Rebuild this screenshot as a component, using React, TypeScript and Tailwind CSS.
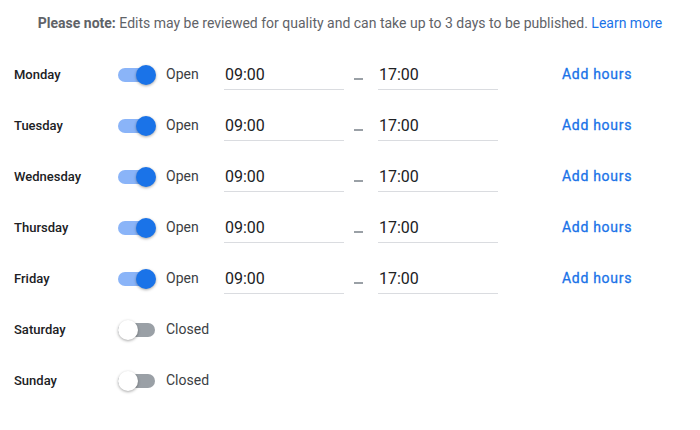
const days = [
  { name: "Monday", open: true },
  { name: "Tuesday", open: true },
  { name: "Wednesday", open: true },
  { name: "Thursday", open: true },
  { name: "Friday", open: true },
  { name: "Saturday", open: false },
  { name: "Sunday", open: false },
]

function Toggle({ on }: { on: boolean }) {
  return (
    <div className="relative w-[38px] h-[20px] flex items-center">
      <div className={`w-[37px] h-[14px] rounded-full ${on ? "bg-[#8ab4f8]" : "bg-[#9aa0a6]"}`} />
      <div
        className={`absolute top-0 w-[20px] h-[20px] rounded-full shadow-[0_1px_3px_rgba(0,0,0,0.35)] ${
          on ? "left-[18px] bg-[#1a73e8]" : "left-0 bg-white"
        }`}
      />
    </div>
  )
}

function TimeField({ value }: { value: string }) {
  return (
    <div className="w-[120px] h-[30px] flex items-center border-b border-[#dadce0] text-[16px] text-[#202124] pl-[1px] pt-[2px]">
      {value}
    </div>
  )
}

export default function App() {
  return (
    <div className="w-[700px] h-[430px] bg-white font-['Roboto',sans-serif] px-[14px]">
      {/* note */}
      <div className="pt-[15px] text-center text-[14px] leading-[16px] text-[#5f6368]">
        <span className="font-bold">Please note:</span> Edits may be reviewed for quality and can take up to 3 days to be
        published. <span className="text-[#1a73e8]">Learn more</span>
      </div>

      <div className="mt-[18px]">
        {days.map((d) => (
          <div key={d.name} className="h-[51px] flex items-center">
            <div className="w-[104px] text-[13px] font-medium text-[#202124]">{d.name}</div>
            <div className="w-[48px] flex">
              <Toggle on={d.open} />
            </div>
            <div className="w-[58px] text-[14px] text-[#3c4043]">{d.open ? "Open" : "Closed"}</div>
            {d.open && (
              <>
                <TimeField value="09:00" />
                <div className="w-[34px] pl-[10px] pt-[8px] flex">
                  <div className="w-[9px] h-[2px] bg-[#9aa0a6]" />
                </div>
                <TimeField value="17:00" />
                <div className="ml-[64px] text-[14px] tracking-[0.7px] text-[#1a73e8] [-webkit-text-stroke:0.3px_#1a73e8]">
                  Add hours
                </div>
              </>
            )}
          </div>
        ))}
      </div>
    </div>
  )
}
